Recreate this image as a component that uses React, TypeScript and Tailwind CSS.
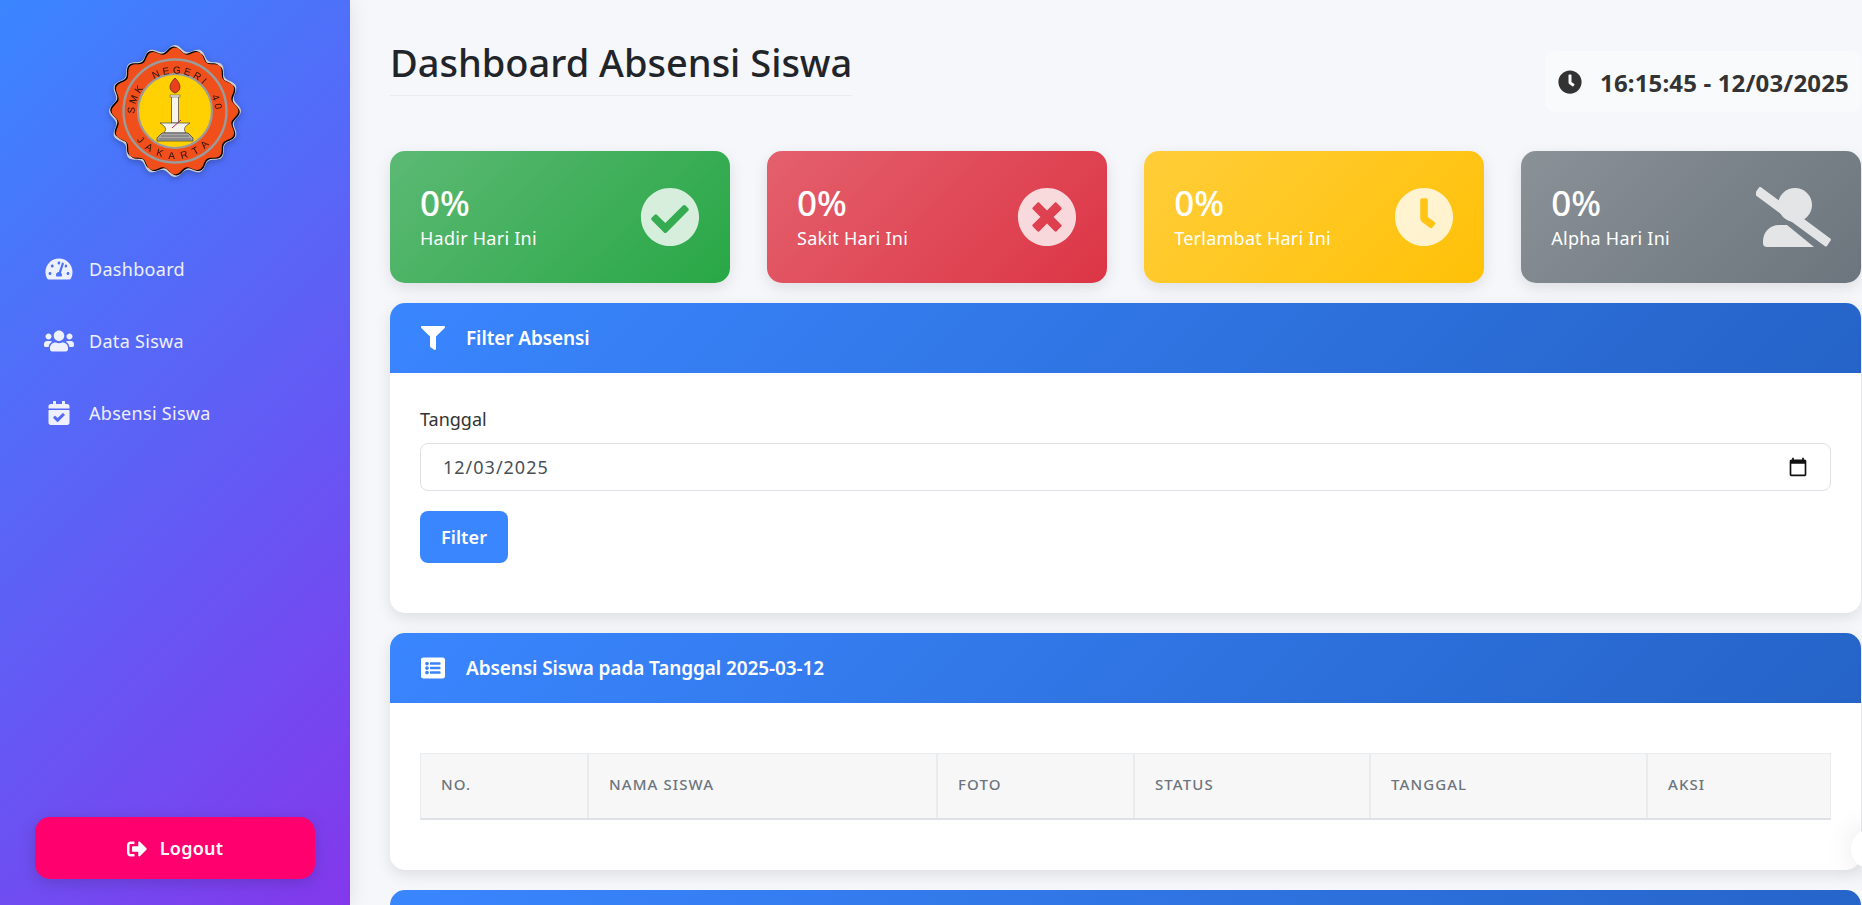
import { FaTachometerAlt, FaUsers, FaCalendarCheck, FaSignOutAlt, FaFilter, FaListAlt, FaClock, FaCheckCircle, FaTimesCircle } from 'react-icons/fa';

// the package's user-slash has a smaller head than the one in the design
const UserSlashIcon = ({ className }: { className?: string }) => (
  <svg viewBox="11 11 75 60" fill="#fff" className={className}>
    <circle cx="50" cy="29" r="17" />
    <path d="M22 71 a4 4 0 0 1 -4 -4 v-2 c0 -9 7 -16 16 -16 h8 L69 71 Z" />
    <path d="M10 17 L14 11.5 a1.5 1.5 0 0 1 2 -0.3 L85.3 62.6 a1.5 1.5 0 0 1 0.3 2 L82 70 a1.5 1.5 0 0 1 -2 0.3 L10.3 19 a1.5 1.5 0 0 1 -0.3 -2 Z" />
  </svg>
);

const navItems = [
  { label: 'Dashboard', icon: FaTachometerAlt },
  { label: 'Data Siswa', icon: FaUsers },
  { label: 'Absensi Siswa', icon: FaCalendarCheck },
];

const stats = [
  { label: 'Hadir Hari Ini', icon: FaCheckCircle, bg: 'bg-[linear-gradient(135deg,#5cb974,#28a745)]', iconSize: 'w-[60px]' },
  { label: 'Sakit Hari Ini', icon: FaTimesCircle, bg: 'bg-[linear-gradient(135deg,#e4606d,#dc3545)]', iconSize: 'w-[60px]' },
  { label: 'Terlambat Hari Ini', icon: FaClock, bg: 'bg-[linear-gradient(135deg,#ffcd39,#ffc107)]', iconSize: 'w-[60px]' },
  { label: 'Alpha Hari Ini', icon: UserSlashIcon, bg: 'bg-[linear-gradient(135deg,#8a9197,#6c757d)]', iconSize: 'w-[75px]' },
];

const columns = [
  { label: 'No.', w: 'w-[168px]' },
  { label: 'Nama Siswa', w: 'w-[349px]' },
  { label: 'Foto', w: 'w-[197px]' },
  { label: 'Status', w: 'w-[236px]' },
  { label: 'Tanggal', w: 'w-[277px]' },
  { label: 'Aksi', w: 'flex-1' },
];

// wavy seal edge, one peak per scallop
const scallop = (r: number, amp: number) => {
  const pts: string[] = [];
  for (let i = 0; i < 360; i += 2) {
    const t = (i * Math.PI) / 180;
    const rr = r + amp * Math.cos(16 * t);
    const a = t - Math.PI / 2;
    pts.push(`${(70 + rr * Math.cos(a)).toFixed(2)},${(70 + rr * Math.sin(a)).toFixed(2)}`);
  }
  return `M${pts.join('L')}Z`;
};

const Logo = () => (
  <svg width="140" height="140" viewBox="0 0 140 140" className="drop-shadow-[0_2px_3px_rgba(0,0,0,0.25)]">
    <defs>
      <path id="arcTop" d="M 29.5 73 A 40.5 40.5 0 1 1 110.5 73" fill="none" />
      <path id="arcBottom" d="M 30.7 97.5 A 48 48 0 0 0 109.3 97.5" fill="none" />
    </defs>
    <path d={scallop(63, 3)} fill="#cfcfcf" />
    <path d={scallop(60.5, 3)} fill="#000" transform="translate(-1.3 -1)" />
    <path d={scallop(60.5, 3)} fill="#000" transform="translate(1.3 1)" />
    <path d={scallop(60.5, 3)} fill="#f04f1b" />
    <circle cx="70" cy="70" r="51.5" fill="none" stroke="#9b9b9b" strokeWidth="2.4" />
    <circle cx="70" cy="70" r="37" fill="#ffd103" stroke="#9b9b9b" strokeWidth="2.2" />
    <text fontFamily="'Liberation Sans', sans-serif" fontSize="10" fill="#2a1208" letterSpacing="2.8" wordSpacing="6">
      <textPath href="#arcTop">SMK NEGERI 40</textPath>
    </text>
    <text fontFamily="'Liberation Sans', sans-serif" fontSize="10" fill="#2a1208" letterSpacing="6.3">
      <textPath href="#arcBottom" startOffset="2">JAKARTA</textPath>
    </text>
    <path d="M70 37 c3 3 5 6 5 9 c0 3 -2 5 -5 6 c-3 -1 -5 -3 -5 -6 c0 -3 2 -6 5 -9Z" fill="#e8401c" stroke="#6b2a1a" strokeWidth="0.8" />
    <rect x="66.5" y="55" width="7" height="27" fill="#f7f4ea" stroke="#444" strokeWidth="0.7" />
    <rect x="65" y="54" width="10" height="2" fill="#f7f4ea" stroke="#444" strokeWidth="0.5" />
    <path d="M55 82 H85 L81 85 C79 87 79 89 81 92 H59 C61 89 61 87 59 85Z" fill="#f7f4ea" stroke="#444" strokeWidth="0.7" />
    <path d="M57 92 H83 L88 97 V100 H52 V97Z" fill="#a9a9a9" stroke="#333" strokeWidth="0.7" />
    <path d="M56 95 H84 M54 98 H86" stroke="#444" strokeWidth="0.6" />
    <path d="M67 87 L76 79" stroke="#9c2a6c" strokeWidth="1" />
  </svg>
);

const CardHeader = ({ icon: Icon, title }: { icon: typeof FaFilter; title: string }) => (
  <div className="flex h-[70px] items-center rounded-t-[15px] bg-[linear-gradient(135deg,#3a86ff,#2563c7)] px-[30px] text-white">
    <Icon className="mr-[20px] h-[24px] w-[26px] shrink-0" />
    <h3 className="pt-[1px] text-[19px] font-semibold tracking-[-0.1px]">{title}</h3>
  </div>
);

export default function App() {
  return (
    <div className="relative flex h-[905px] w-full overflow-hidden bg-[#f5f7fb] font-['Noto_Sans',sans-serif] text-[#212529]">
      <aside className="flex w-[350px] shrink-0 flex-col bg-[linear-gradient(135deg,#3a86ff,#8338ec)] px-[35px] pb-[26px] shadow-[0_0_20px_rgba(0,0,0,0.1)]">
        <div className="flex justify-center pt-[41px]">
          <Logo />
        </div>
        <nav className="mt-[52px] flex flex-col">
          {navItems.map(({ label, icon: Icon }) => (
            <a key={label} className="flex h-[72px] items-center pl-[9px] text-[18px] tracking-[0.3px] text-white/90">
              <Icon className="mr-[15px] h-[24px] w-[30px] shrink-0" />
              {label}
            </a>
          ))}
        </nav>
        <button className="mt-auto flex h-[62px] w-full items-center justify-center rounded-[15px] bg-[#ff006e] pt-[1px] text-[18px] font-semibold tracking-[0.2px] text-white shadow-[0_4px_15px_rgba(0,0,0,0.15)]">
          <FaSignOutAlt className="mr-[13px] h-[20px] w-[20px]" />
          Logout
        </button>
      </aside>

      <main className="min-w-0 flex-1 pl-[40px] pr-px">
        <div className="flex h-[151px] items-start justify-between">
          <h1 className="mt-[37px] border-b border-[#e9ecef] pb-[8px] text-[38px] leading-[50px] font-medium">
            Dashboard Absensi Siswa
          </h1>
          <div className="mt-[51px] flex h-[61px] w-[316px] items-center rounded-[10px] bg-white/40 pl-[13px] text-[24px] font-bold tracking-[0.15px] text-[#333]">
            <FaClock className="mr-[18px] h-[24px] w-[24px]" />
            <span className="pt-[2px]">16:15:45 - 12/03/2025</span>
          </div>
        </div>

        <div className="grid grid-cols-4 gap-[37.33px]">
          {stats.map(({ label, icon: Icon, bg, iconSize }) => (
            <div key={label} className={`flex h-[132px] items-center justify-between rounded-[15px] p-[30px] text-white shadow-[0_5px_15px_rgba(0,0,0,0.1)] ${bg}`}>
              <div>
                <div className="text-[35px] leading-[38px] font-medium">0%</div>
                <div className="mt-[3px] text-[18px] leading-[26px] tracking-[0.25px]">{label}</div>
              </div>
              <Icon className={`h-[60px] opacity-80 ${iconSize}`} />
            </div>
          ))}
        </div>

        <section className="mt-[20px] h-[310px] rounded-[15px] bg-white shadow-[0_5px_15px_rgba(0,0,0,0.1)]">
          <CardHeader icon={FaFilter} title="Filter Absensi" />
          <div className="p-[30px]">
            <label className="block text-[18px] leading-[32px] text-[#333]">Tanggal</label>
            <div className="mt-[8px] flex h-[48px] items-center justify-between rounded-[8px] border border-[#dee2e6] pr-[22px] pl-[22px] text-[18px] tracking-[1px] text-[#495057]">
              <span>12/03/2025</span>
              <svg width="20" height="20" viewBox="0 0 24 24" fill="#111">
                <path d="M20 3h-1V1h-2v2H7V1H5v2H4c-1.1 0-2 .9-2 2v16c0 1.1.9 2 2 2h16c1.1 0 2-.9 2-2V5c0-1.1-.9-2-2-2zm0 18H4V8h16v13z" />
              </svg>
            </div>
            <button className="mt-[20px] h-[52px] w-[88px] rounded-[8px] bg-[#3a86ff] pt-[1px] text-[18px] font-semibold tracking-[0.1px] text-white">
              Filter
            </button>
          </div>
        </section>

        <section className="mt-[20px] h-[237px] rounded-[15px] bg-white shadow-[0_5px_15px_rgba(0,0,0,0.1)]">
          <CardHeader icon={FaListAlt} title="Absensi Siswa pada Tanggal 2025-03-12" />
          <div className="px-[30px] pt-[50px]">
            <div className="flex h-[67px] border border-b-2 border-[#e9ecef] border-b-[#dee2e6] bg-[#f7f7f8]">
              {columns.map((c, i) => (
                <div key={c.label} className={`flex items-center px-[20px] pb-[3px] text-[15px] font-medium tracking-[1.1px] text-[#6c757d] uppercase ${c.w} ${i < 5 ? 'border-r-2 border-[#e9ecef]' : ''}`}>
                  {c.label}
                </div>
              ))}
            </div>
          </div>
        </section>

        <section className="mt-[20px] h-[70px] rounded-t-[15px] bg-[linear-gradient(135deg,#3a86ff,#2563c7)]" />
      </main>

      {/* floating circle peeking in from the right edge */}
      <div className="absolute top-[829px] right-[-29px] h-[40px] w-[40px] rounded-full bg-white shadow-[0_0_30px_rgba(0,0,0,0.1)]" />
    </div>
  );
}
